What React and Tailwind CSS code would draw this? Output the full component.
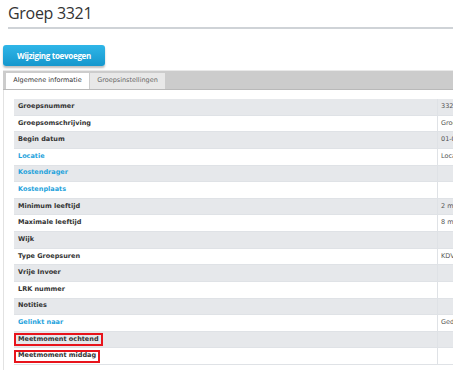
import React from "react";

const rows = [
  { label: "Groepsnummer", value: "3321" },
  { label: "Groepsomschrijving", value: "Groep 3321" },
  { label: "Begin datum", value: "01-01-2020" },
  { label: "Locatie", value: "Locatie", link: true },
  { label: "Kostendrager", value: "", link: true },
  { label: "Kostenplaats", value: "", link: true },
  { label: "Minimum leeftijd", value: "2 maanden" },
  { label: "Maximale leeftijd", value: "8 maanden" },
  { label: "Wijk", value: "" },
  { label: "Type Groepsuren", value: "KDV" },
  { label: "Vrije Invoer", value: "" },
  { label: "LRK nummer", value: "" },
  { label: "Notities", value: "" },
  { label: "Gelinkt naar", value: "Gedeeld", link: true },
  { label: "Meetmoment ochtend", value: "", boxed: true },
  { label: "Meetmoment middag", value: "", boxed: true },
];

export default function App() {
  return (
    <div className="w-[453px] h-[370px] overflow-hidden bg-white font-['DejaVu_Sans',sans-serif] text-[#333]">
      <div className="pl-2 pt-[2px]">
        <h1 className="font-['Open_Sans',sans-serif] text-[16px] leading-[22px] text-[#333] tracking-[-0.3px]">
          Groep 3321
        </h1>
        <div className="mt-[3px] h-[2px] bg-[#cfd3d7]" />
      </div>

      <div className="ml-[3px] mt-[16px] w-[102px] h-[21px] rounded-[3px] bg-gradient-to-b from-[#2fb6e8] to-[#1597cd] shadow-[0_2px_2px_rgba(0,0,0,0.25)] flex items-center justify-center">
        <span className="font-['Open_Sans',sans-serif] font-bold text-[8px] text-white tracking-[-0.3px]">
          Wijziging toevoegen
        </span>
      </div>

      <div className="ml-[3px] mt-[4px] w-[600px]">
        <div className="h-[20px] bg-[#cccccc] border-t border-[#e9e9e9] border-b border-b-[#b9b9b9] pl-[3px] flex items-end gap-[1px]">
          <div className="h-[16px] w-[83px] bg-white flex items-center justify-center text-[6.5px] text-[#333]">
            Algemene informatie
          </div>
          <div className="h-[16px] w-[75px] bg-[#e8e8e8] flex items-center justify-center text-[6.5px] text-[#666]">
            Groepsinstellingen
          </div>
        </div>
        <div className="border-l border-[#e2e2e2] pl-[10px] pt-[9px] pb-[6px]">
          <div className="w-[560px]">
            {rows.map((r, i) => (
              <div
                key={r.label}
                className={`flex h-[16.63px] border-b border-[#dfe2e6] ${i % 2 === 0 ? "bg-[#e6e8eb]" : "bg-white"}`}
              >
                <div className={`w-[423px] flex items-center ${r.boxed ? "pl-0" : "pl-[4px]"}`}>
                  {r.boxed ? (
                    <span className="border-2 border-[#e8141c] h-[13px] flex items-center pl-[2px] pr-[2px] text-[6.5px] font-bold text-[#333]">
                      {r.label}
                    </span>
                  ) : (
                    <span className={`text-[6.5px] font-bold ${r.link ? "text-[#1fa3dc]" : "text-[#333]"}`}>
                      {r.label}
                    </span>
                  )}
                </div>
                <div className="flex-1 border-l border-[#dfe2e6] pl-[3px] flex items-center text-[6.5px] text-[#555]">
                  {r.value}
                </div>
              </div>
            ))}
          </div>
        </div>
      </div>
    </div>
  );
}
